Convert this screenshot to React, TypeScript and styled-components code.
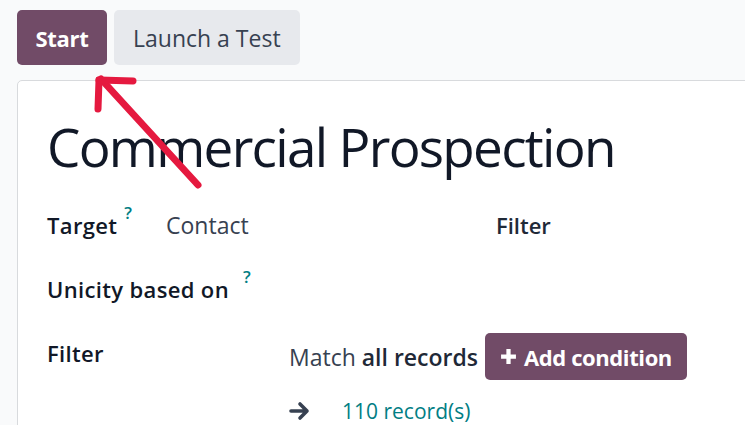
import React from "react";
import styled, { createGlobalStyle } from "styled-components";

const Global = createGlobalStyle`
  html, body { margin: 0; padding: 0; }
  body {
    background: #f9fafb;
    font-family: "Open Sans", "Noto Sans", sans-serif;
    color: #374151;
    overflow: hidden;
    width: 745px;
    height: 425px;
  }
`;

const Page = styled.div`
  position: relative;
  padding: 10px 0 0 17px;
  width: 745px;
  height: 425px;
  box-sizing: border-box;
  overflow: hidden;
`;

const ButtonBar = styled.div`
  display: flex;
  gap: 7px;
`;

const Button = styled.button<{ $primary?: boolean }>`
  height: 55px;
  padding: 0 ${(p) => (p.$primary ? "18.5px" : "19px")};
  border: none;
  border-radius: 5px;
  font-family: inherit;
  font-size: ${(p) => (p.$primary ? "22px" : "23px")};
  font-weight: ${(p) => (p.$primary ? 700 : 400)};
  background: ${(p) => (p.$primary ? "#714b67" : "#e7e9ed")};
  color: ${(p) => (p.$primary ? "#ffffff" : "#374151")};
  display: flex;
  align-items: center;
  letter-spacing: ${(p) => (p.$primary ? "-0.3px" : "0")};
`;

const Card = styled.div`
  margin-top: 15px;
  width: 1000px;
  height: 400px;
  background: #ffffff;
  border: 1px solid #d8dadd;
  border-radius: 5px;
  padding: 30px 0 0 29px;
  box-sizing: border-box;
`;

const Title = styled.h1`
  margin: 0;
  font-size: 53px;
  font-weight: 400;
  color: #111827;
  line-height: 72px;
  letter-spacing: -1.7px;
`;

const TopGroups = styled.div`
  margin-top: 26px;
  display: grid;
  grid-template-columns: 449px 1fr;
`;

const Group = styled.div`
  display: grid;
  grid-template-columns: 119px 1fr;
  grid-auto-rows: 64px;
  align-items: start;
`;

const Label = styled.div`
  font-size: 22px;
  font-weight: 600;
  color: #111827;
  line-height: 32px;
  height: 32px;
  white-space: nowrap;
  letter-spacing: 0.35px;
`;

const Help = styled.span<{ $gap?: number }>`
  display: inline-block;
  vertical-align: top;
  line-height: 1;
  margin-top: -5px;
  color: #017e84;
  font-size: 17px;
  font-weight: 600;
  margin-left: ${(p) => p.$gap ?? 7}px;
`;

const Value = styled.div`
  font-size: 23px;
  line-height: 32px;
  color: #374151;
`;

const RightLabel = styled(Label)`
  color: #1f2937;
  letter-spacing: 0;
`;

const FilterRow = styled.div`
  display: grid;
  grid-template-columns: 242px 1fr;
`;

const FilterValue = styled.div`
  display: flex;
  flex-direction: column;
  gap: 15px;
  margin-top: -4px;
`;

const MatchLine = styled.div`
  display: flex;
  align-items: center;
  gap: 7px;
  font-size: 23px;
  color: #374151;
`;

const Strong = styled.b`
  font-weight: 600;
  color: #1f2937;
`;

const AddButton = styled.button`
  height: 47px;
  padding: 0 15px;
  border: none;
  border-radius: 5px;
  background: #714b67;
  color: #ffffff;
  font-family: inherit;
  font-size: 22px;
  font-weight: 700;
  display: flex;
  align-items: center;
  gap: 7px;
  letter-spacing: -0.4px;
`;

const RecordsLine = styled.div`
  display: flex;
  align-items: center;
  gap: 31px;
  font-size: 21px;
  line-height: 32px;
`;

const RecordsLink = styled.span`
  color: #017e84;
  font-weight: 500;
`;

const Annotation = styled.svg`
  position: absolute;
  left: 0;
  top: 0;
  pointer-events: none;
`;

export default function App() {
  return (
    <>
      <Global />
      <Page>
        <ButtonBar>
          <Button $primary>Start</Button>
          <Button>Launch a Test</Button>
        </ButtonBar>
        <Card>
          <Title>Commercial Prospection</Title>
          <TopGroups>
            <Group>
              <Label>
                Target<Help>?</Help>
              </Label>
              <Value>Contact</Value>
              <Label>
                Unicity based on<Help $gap={14}>?</Help>
              </Label>
              <Value />
            </Group>
            <div>
              <RightLabel>Filter</RightLabel>
            </div>
          </TopGroups>
          <FilterRow>
            <Label>Filter</Label>
            <FilterValue>
              <MatchLine>
                <span>
                  Match <Strong>all records</Strong>
                </span>
                <AddButton>
                  <svg width="17" height="17" viewBox="0 0 16 16">
                    <path d="M6 1h4v5h5v4h-5v5H6v-5H1V6h5z" fill="#fff" />
                  </svg>
                  Add condition
                </AddButton>
              </MatchLine>
              <RecordsLine>
                <svg width="22" height="20" viewBox="0 0 22 20">
                  <path
                    d="M2 10h16M11 3l7 7-7 7"
                    fill="none"
                    stroke="#374151"
                    strokeWidth="3.6"
                    strokeLinecap="round"
                    strokeLinejoin="round"
                  />
                </svg>
                <RecordsLink>110 record(s)</RecordsLink>
              </RecordsLine>
            </FilterValue>
          </FilterRow>
        </Card>
        <Annotation width="745" height="425" viewBox="0 0 745 425">
          <g
            stroke="#e5193f"
            strokeWidth="7"
            strokeLinecap="round"
            fill="none"
          >
            <path d="M198 185L101 79" />
            <path d="M99 80L98 109" />
            <path d="M99 80L133 81" />
          </g>
        </Annotation>
      </Page>
    </>
  );
}
